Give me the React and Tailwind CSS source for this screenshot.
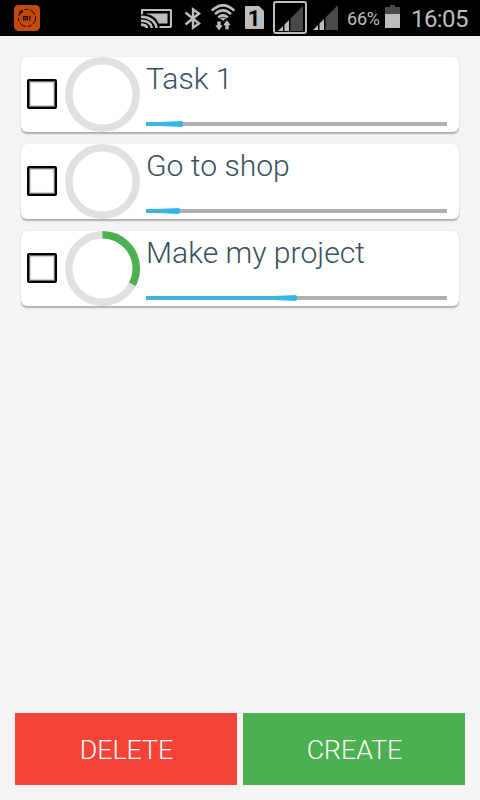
const tasks = [
  { id: 1, title: "Task 1", progress: 37, ring: 0 },
  { id: 2, title: "Go to shop", progress: 34, ring: 0 },
  { id: 3, title: "Make my project", progress: 151, ring: 0.327 },
];

export default function App() {
  return (
    <div className="flex h-[800px] w-[480px] flex-col overflow-hidden bg-[#f4f4f4] font-['Roboto',sans-serif]">
      <StatusBar />
      <main className="flex flex-1 flex-col gap-3 px-[21px] pt-[21px]">
        {tasks.map((task) => (
          <TaskCard key={task.id} task={task} />
        ))}
      </main>
      <footer className="flex gap-1.5 px-[15px] pb-[15px]">
        <button className="h-[72px] w-[222px] bg-[#f54337] pt-0.5 pl-px text-[26.7px] font-light text-white">DELETE</button>
        <button className="h-[72px] w-[222px] bg-[#4caf50] pt-0.5 pl-px text-[26.7px] font-light text-white">CREATE</button>
      </footer>
    </div>
  );
}

function TaskCard({ task }) {
  return (
    <div className="flex h-[75px] items-center rounded-md bg-white pl-1.5 shadow-[0_1.5px_1.5px_rgba(0,0,0,0.28),0_0_1px_rgba(0,0,0,0.12)]">
      <span className="mb-0.5 size-[30px] shrink-0 rounded-[2px] border-2 border-black shadow-[inset_0_0_0_1px_#6f6f6f,inset_0_0_1px_1.5px_#aaa]" />
      <ProgressRing value={task.ring} />
      <div className="ml-1.5 flex h-full w-[301px] flex-col justify-between pb-1.5">
        <h2 className="pt-1 text-[30.1px] leading-9 font-light whitespace-nowrap text-[#37515f]">{task.title}</h2>
        <ProgressBar value={task.progress} />
      </div>
    </div>
  );
}

function ProgressRing({ value }) {
  return (
    <svg className="ml-2 size-[75px] shrink-0" viewBox="0 0 75 75" fill="none" strokeWidth="7.5">
      <circle cx="37.5" cy="37.5" r="33.75" stroke="#e0e0e0" />
      {value > 0 && (
        <circle
          cx="37.5"
          cy="37.5"
          r="33.75"
          stroke="#4caf50"
          pathLength="1"
          strokeDasharray={`${value} 1`}
          transform="rotate(-90 37.5 37.5)"
        />
      )}
    </svg>
  );
}

function ProgressBar({ value }) {
  return (
    <div className="h-1 bg-[#b1b1b1]">
      <div
        className="flex h-1 justify-end rounded-r-[2px] bg-[#40b4df]"
        style={{ width: value }}
      >
        <span className="-mt-px h-[5.5px] w-6 rounded-r-[2px] bg-linear-to-r from-[#33b5e5]/0 to-[#33b5e5] shadow-[0_0_2px_rgba(51,181,229,0.18)]" />
      </div>
    </div>
  );
}

function StatusBar() {
  return (
    <header className="flex h-9 shrink-0 items-start bg-black text-[#bdbdbd]">
      <MiIcon />
      <CastIcon />
      <BluetoothIcon />
      <WifiIcon />
      <SimIcon />
      <span className="mt-px ml-[9px] h-[33px] w-[34px] shrink-0 rounded-[3px] border-2 border-current pt-[3px] pl-[3px]">
        <SignalIcon />
      </span>
      <span className="mt-[5px] ml-1.5 shrink-0">
        <SignalIcon />
      </span>
      <span className="mt-[7px] ml-[9px] w-[34px] shrink-0 text-[18px] leading-6 tracking-[-0.2px]">66%</span>
      <BatteryIcon />
      <span className="mt-[3px] ml-[11px] shrink-0 text-[24px] leading-8 tracking-[-0.6px]">16:05</span>
    </header>
  );
}

function MiIcon() {
  return (
    <svg className="mt-[5px] ml-3.5 size-[26px] shrink-0" viewBox="0 0 26 26" fill="none">
      <rect width="26" height="26" rx="4.5" fill="#c34b07" />
      <circle cx="13" cy="13" r="8.6" stroke="#180800" strokeWidth="1" strokeDasharray="7 1.5 4 2" />
      <path d="M5.7 8.2 8.5 5.6" stroke="#180800" strokeWidth="2.4" />
      <path d="M9.7 15.5v-4h3.6v4M11.5 12.8v2.7M15.8 11v4.5" stroke="#180800" strokeWidth="1.2" />
    </svg>
  );
}

function CastIcon() {
  return (
    <svg className="mt-[9px] ml-[101px] h-[19px] w-[31px] shrink-0" viewBox="0 0 31 19" fill="none" stroke="currentColor">
      <path d="M1 5.5V1.5Q1 1 1.5 1H29Q30 1 30 2V17Q30 18 29 18H18.5" strokeWidth="2.2" />
      <path d="M5.5 4.5H26.5V14.5H17.5Q15 6.5 5.5 5Z" fill="currentColor" stroke="none" />
      <path d="M0 7.8C8 7.8 14.5 12 15.6 19M0 11.8C6 11.8 10 14.5 11 19M0 15.6C3.5 15.6 5.5 17 6.3 19" strokeWidth="2.6" />
    </svg>
  );
}

function BluetoothIcon() {
  return (
    <svg className="mt-[7px] ml-3 h-[23px] w-[18px] shrink-0" viewBox="0 0 18 23" fill="none" stroke="currentColor" strokeWidth="2.4">
      <path d="m1.5 5.5 13.5 11-6 4.2V2.3l6 4.2-13.5 11" />
    </svg>
  );
}

function WifiIcon() {
  return (
    <svg className="mt-1 ml-2 h-[27px] w-[26px] shrink-0" viewBox="0 0 26 27" fill="none" stroke="currentColor">
      <path d="M1.7 6.6Q13-4 24.3 6.6M5 10.1Q13 2.8 21 10.1M8.3 13.5Q13 9.3 17.7 13.5" strokeWidth="2.6" />
      <path d="M10.2 14.3Q13 12.5 15.8 14.3L13 17Z" fill="currentColor" stroke="none" />
      <path d="M7.3 17.5h3.4v3.7h2L9 26.5 5.3 21.2h2ZM15.3 25.3h3.4v-4h2L17 16.2l-3.7 5.1h2Z" fill="currentColor" stroke="none" />
    </svg>
  );
}

function SimIcon() {
  return (
    <svg className="mt-1.5 ml-[9px] h-[23px] w-[19px] shrink-0" viewBox="0 0 19 23">
      <path d="M1 0h13l5 5v17a1 1 0 0 1-1 1H1a1 1 0 0 1-1-1V1a1 1 0 0 1 1-1Z" fill="currentColor" />
      <text x="9" y="19.5" textAnchor="middle" className="fill-black text-[22px] font-bold">1</text>
    </svg>
  );
}

function SignalIcon() {
  return (
    <svg className="block h-[25px] w-[25px]" viewBox="0 0 25 25">
      <path d="M12.5 12.5 25 0v25H12.5Z" fill="#4a4a4a" />
      <path d="M0 25 5 20v5ZM6.5 18.5l4.5-4.5v11H6.5Z" fill="currentColor" />
    </svg>
  );
}

function BatteryIcon() {
  return (
    <svg className="mt-[5px] ml-1 h-[23px] w-[15px] shrink-0" viewBox="0 0 15 23">
      <path d="M5 0h5v2h5v7H0V2h5Z" fill="#4a4a4a" />
      <path d="M0 9h15v14H0Z" fill="currentColor" />
    </svg>
  );
}
